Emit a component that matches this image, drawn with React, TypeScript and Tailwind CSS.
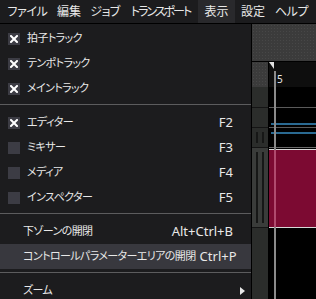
import { ReactNode } from "react";

const FONT = "font-['Noto_Sans','Noto_Sans_CJK_JP',sans-serif] [font-feature-settings:'palt']";

// widths picked so the labels land where the original menu bar has them
const menuBar = [
    { label: "ファイル", w: "w-[47px]", tr: "tracking-[-0.4px]" },
    { label: "編集", w: "w-[36px]", tr: "tracking-[0px]" },
    { label: "ジョブ", w: "w-[36px]", tr: "tracking-[-0.6px]" },
    { label: "トランスポート", w: "w-[75px]", tr: "tracking-[-2px]" },
    { label: "表示", w: "w-[37px]", tr: "tracking-[0px]" },
    { label: "設定", w: "w-[36px]", tr: "tracking-[0px]" },
    { label: "ヘルプ", w: "w-[41px]", tr: "tracking-[-0.4px]" },
];

type Item =
    | { kind: "sep" }
    | { kind: "item"; label: string; check?: boolean; checked?: boolean; shortcut?: string; active?: boolean; submenu?: boolean };

const items: Item[] = [
    { kind: "item", label: "拍子トラック", check: true, checked: true },
    { kind: "item", label: "テンポトラック", check: true, checked: true },
    { kind: "item", label: "メイントラック", check: true, checked: true },
    { kind: "sep" },
    { kind: "item", label: "エディター", check: true, checked: true, shortcut: "F2" },
    { kind: "item", label: "ミキサー", check: true, shortcut: "F3" },
    { kind: "item", label: "メディア", check: true, shortcut: "F4" },
    { kind: "item", label: "インスペクター", check: true, shortcut: "F5" },
    { kind: "sep" },
    { kind: "item", label: "下ゾーンの開閉", shortcut: "Alt+Ctrl+B" },
    { kind: "item", label: "コントロールパラメーターエリアの開閉", shortcut: "Ctrl+P", active: true },
    { kind: "sep" },
    { kind: "item", label: "ズーム", submenu: true },
];

const CheckBox = ({ checked }: { checked?: boolean }) => (
    <span className="w-[12px] h-[12px] bg-[#3c3c44] flex items-center justify-center shrink-0">
        {checked && (
            <svg width="8" height="8" viewBox="0 0 8 8">
                <path d="M1 1 L7 7 M7 1 L1 7" stroke="#ffffff" strokeWidth="2" strokeLinecap="square" />
            </svg>
        )}
    </span>
);

const Row = ({ children, className = "" }: { children?: ReactNode; className?: string }) => (
    <div className={`border-b border-[#141414] ${className}`}>{children}</div>
);

const App = () => {
    return (
        <div className={`w-[316px] h-[299px] overflow-hidden bg-black text-[11px] tracking-[-0.6px] text-[#e8e8e8] ${FONT}`}>
            {/* menu bar */}
            <div className="h-[24px] flex items-stretch pl-[4px] bg-[#1c1c1e] border-b border-black whitespace-nowrap">
                {menuBar.map((m) => (
                    <div
                        key={m.label}
                        className={`shrink-0 ${m.w} ${m.tr} text-[12px] flex items-center justify-center leading-none ${m.label === "表示" ? "bg-[#29292c]" : ""}`}
                    >
                        {m.label}
                    </div>
                ))}
            </div>

            <div className="flex h-[275px]">
                {/* dropdown */}
                <div className="w-[252px] shrink-0 bg-[#1c1c1e] border-r border-black pt-[2px]">
                    {items.map((it, i) =>
                        it.kind === "sep" ? (
                            <div key={i} className="h-[9px] pt-[3px]">
                                <div className="h-[1px] bg-[#5c5c5e]" />
                            </div>
                        ) : (
                            <div
                                key={i}
                                className={`h-[25px] flex items-center pr-[18px] whitespace-nowrap ${it.check ? "pl-[8px]" : "pl-[23px]"} ${it.active ? "bg-[#38383e]" : ""}`}
                            >
                                {it.check && <CheckBox checked={it.checked} />}
                                <span className={it.check ? "ml-[7px]" : ""}>{it.label}</span>
                                <span className="ml-auto pl-[4px] text-[13px] tracking-normal">{it.shortcut}</span>
                                {it.submenu && (
                                    <svg width="5" height="8" viewBox="0 0 5 8" className="-mr-[12px]">
                                        <path d="M0 0 L5 4 L0 8 Z" fill="#e8e8e8" />
                                    </svg>
                                )}
                            </div>
                        )
                    )}
                </div>

                {/* project window behind */}
                <div className="flex-1 flex flex-col">
                    <div className="h-[38px] border-b border-black bg-[#3b3b3b] bg-[radial-gradient(#474747_1px,transparent_1px)] bg-[length:3px_3px]" />
                    <div className="flex-1 flex">
                        {/* track list column */}
                        <div className="w-[17px] shrink-0 flex flex-col bg-[#2b2d2b] border-r border-black">
                            <div className="h-[25px] bg-[#3b3b3b] bg-[radial-gradient(#474747_1px,transparent_1px)] bg-[length:3px_3px]" />
                            <Row className="h-[21px]" />
                            <Row className="h-[20px]" />
                            <Row className="h-[20px] flex justify-center gap-[4px] pt-[4px]">
                                <span className="w-[2px] h-[11px] bg-[#161716]" />
                                <span className="w-[2px] h-[11px] bg-[#161716]" />
                            </Row>
                            <Row className="h-[80px] bg-[#3a3c3a] flex justify-center gap-[4px] pt-[4px]">
                                <span className="w-[2px] h-[71px] bg-[#161716]" />
                                <span className="w-[2px] h-[71px] bg-[#161716]" />
                            </Row>
                            <div className="flex-1" />
                        </div>

                        {/* event area */}
                        <div className="flex-1 relative flex flex-col bg-black">
                            <div className="h-[25px] bg-[#0e0e0e] relative">
                                <svg width="5" height="7" viewBox="0 0 5 7" className="absolute left-0 top-0">
                                    <path d="M0 0 H5 V7 Z" fill="#e0e0e0" />
                                </svg>
                                <span className="absolute left-[8px] top-[12px] text-[10px] leading-none tracking-normal text-[#e8e8e8]">5</span>
                            </div>
                            <div className="h-[21px] border-b border-[#5a5a5a]" />
                            <div className="h-[20px] border-b border-[#5a5a5a] pt-[15px] pl-[2px]">
                                <div className="h-[2px] bg-[#2a6a92]" />
                            </div>
                            <div className="h-[20px] border-b border-[#6a6a6a] pt-[4px] pl-[2px]">
                                <div className="h-[2px] bg-[#2a6a92]" />
                            </div>
                            <div className="h-[1px]" />
                            <div className="h-[79px] bg-[#7c0a32] border-y border-[#d8d8d8]" />
                            <div className="flex-1" />
                            <div className="absolute left-[5px] top-[9px] bottom-0 w-[2px] bg-[#8a8a8a]" />
                            <div className="absolute left-[5px] top-[88px] h-[77px] w-[2px] bg-[#b04a6e]" />
                        </div>
                    </div>
                </div>
            </div>
        </div>
    );
};

export default App;
